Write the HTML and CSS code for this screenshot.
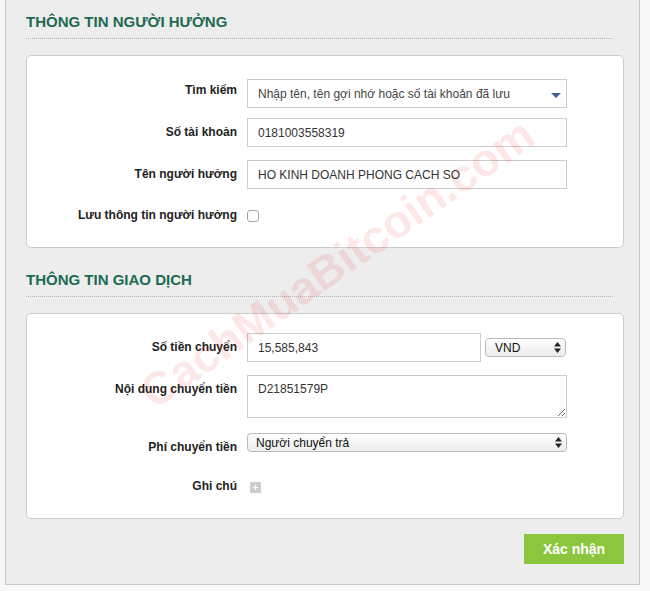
FILE: index.html
```html
<!DOCTYPE html>
<html lang="vi">
<head>
  <meta charset="UTF-8">
  <title>Chuyển tiền</title>
  <link rel="stylesheet" href="styles.css">
</head>
<body>
  <div class="panel">

    <!-- Payee -->
    <h2 class="section-title">THÔNG TIN NGƯỜI HƯỞNG</h2>
    <div class="card card-payee">
      <div class="row row-search">
        <label class="lbl lbl-top" for="search">Tìm kiếm</label>
        <div class="select-wrap">
          <select id="search" class="field select-search">
            <option>Nhập tên, tên gợi nhớ hoặc số tài khoản đã lưu</option>
          </select>
          <svg class="caret" width="10" height="5" viewBox="0 0 10 5"><path d="M0 0h10L5 5z" fill="#3d5f9e"/></svg>
        </div>
      </div>
      <div class="row row-account">
        <label class="lbl" for="account">Số tài khoản</label>
        <input id="account" class="field" type="text" value="0181003558319">
      </div>
      <div class="row row-name">
        <label class="lbl" for="payee">Tên người hưởng</label>
        <input id="payee" class="field" type="text" value="HO KINH DOANH PHONG CACH SO">
      </div>
      <div class="row">
        <label class="lbl" for="save">Lưu thông tin người hưởng</label>
        <input id="save" class="check" type="checkbox">
      </div>
    </div>

    <!-- Transaction -->
    <h2 class="section-title section-second">THÔNG TIN GIAO DỊCH</h2>
    <div class="card card-trans">
      <div class="row row-amount">
        <label class="lbl" for="amount">Số tiền chuyển</label>
        <input id="amount" class="field field-amount" type="text" value="15,585,843">
        <div class="select-wrap">
          <select class="mini-select select-currency"><option>VND</option></select>
          <svg class="updown" width="7" height="11" viewBox="0 0 7 11"><path d="M3.5 0L7 4.5H0zM3.5 11L0 6.5h7z" fill="#222"/></svg>
        </div>
      </div>
      <div class="row row-content">
        <label class="lbl" for="content">Nội dung chuyển tiền</label>
        <textarea id="content" class="field field-area">D21851579P</textarea>
      </div>
      <div class="row row-fee">
        <label class="lbl" for="fee">Phí chuyển tiền</label>
        <div class="select-wrap select-fee-wrap">
          <select id="fee" class="mini-select select-fee"><option>Người chuyển trả</option></select>
          <svg class="updown" width="7" height="11" viewBox="0 0 7 11"><path d="M3.5 0L7 4.5H0zM3.5 11L0 6.5h7z" fill="#222"/></svg>
        </div>
      </div>
      <div class="row">
        <span class="lbl">Ghi chú</span>
        <span class="add-note"><svg width="11" height="11" viewBox="0 0 11 11"><rect width="11" height="11" fill="#cdcdcd"/><path d="M5.5 3v5M3 5.5h5" stroke="#fff" stroke-width="1.2"/></svg></span>
      </div>
    </div>

    <div class="actions">
      <button class="btn" type="button">Xác nhận</button>
    </div>
  </div>

  <div class="watermark">CachMuaBitcoin.com</div>
</body>
</html>
```

FILE: styles.css
```css
:root {
  --green-title: #1d6a52;
  --green-btn: #8cc63f;
  --text: #222222;
  --border: #cccccc;
  --font: "Liberation Sans", Arial, Helvetica, sans-serif;
}
* { box-sizing: border-box; }
body { margin: 0; background: #f8f8f8; font-family: var(--font); color: var(--text); font-size: 12px; }

.panel { width: 635px; margin-left: 5px; background: #ededed; border: 1px solid #c9c9c9; border-top: none; padding: 13px 15px 20px 20px; }
.section-title { margin: 0 11px 16px 0; padding-bottom: 7px; border-bottom: 1px dotted #b5b5b5; font-size: 15px; line-height: 18px; font-weight: bold; color: var(--green-title); }
.section-second { margin-top: 23px; }

.card { background: #fff; border: 1px solid var(--border); border-radius: 5px; }
.card-payee { padding: 23px 0 17px; }
.card-trans { padding: 19px 0 17px; }

.row { display: flex; align-items: center; min-height: 29px; margin-bottom: 12px; }
.row:last-child { margin-bottom: 0; }
.row-search { margin-bottom: 10px; }
.row-account { margin-bottom: 13px; }
.row-amount { margin-bottom: 13px; }
.row-content { align-items: flex-start; margin-bottom: 15px; }
.row-fee { align-items: flex-start; margin-bottom: 10px; }

.lbl { width: 210px; margin-right: 10px; text-align: right; font-weight: bold; line-height: 29px; color: var(--text); }
.lbl-top { align-self: flex-start; line-height: 23px; }

.field { width: 320px; height: 29px; padding: 0 10px; border: 1px solid var(--border); border-radius: 0; background: #fff; font-family: var(--font); font-size: 12px; color: #333; outline: none; }
.field-amount { width: 234px; margin-right: 4px; }
.field-area { height: 43px; padding: 6px 10px; line-height: 14px; resize: vertical; display: block; }

.select-wrap { position: relative; }
.select-search { appearance: none; -webkit-appearance: none; color: #444; }
.caret { position: absolute; right: 6px; top: 14px; pointer-events: none; }

.mini-select { appearance: none; -webkit-appearance: none; height: 19px; padding: 0 0 0 8px; border: 1px solid #b9b9b9; border-radius: 4px; background: linear-gradient(#ffffff, #ececec); font-family: var(--font); font-size: 12px; color: #111; outline: none; }
.select-currency { width: 81px; padding-left: 9px; }
.select-fee { width: 320px; }
.updown { position: absolute; right: 5px; top: 4px; pointer-events: none; }

.check { appearance: none; -webkit-appearance: none; width: 12px; height: 12px; margin: 1px 0 0; border: 1px solid #a5a5a5; border-radius: 3px; background: #fff; }

.add-note { display: flex; margin: 2px 0 0 3px; }
.add-note svg { display: block; }

.actions { display: flex; justify-content: flex-end; margin-top: 15px; }
.btn { width: 100px; height: 30px; border: none; background: var(--green-btn); color: #fff; font-family: var(--font); font-size: 14px; font-weight: bold; cursor: pointer; }

.watermark { position: absolute; left: 337px; top: 263px; transform: translate(-50%, -50%) rotate(-35deg); font-family: var(--font); font-size: 46px; font-weight: bold; color: rgba(235, 0, 0, 0.11); white-space: nowrap; pointer-events: none; }
```
